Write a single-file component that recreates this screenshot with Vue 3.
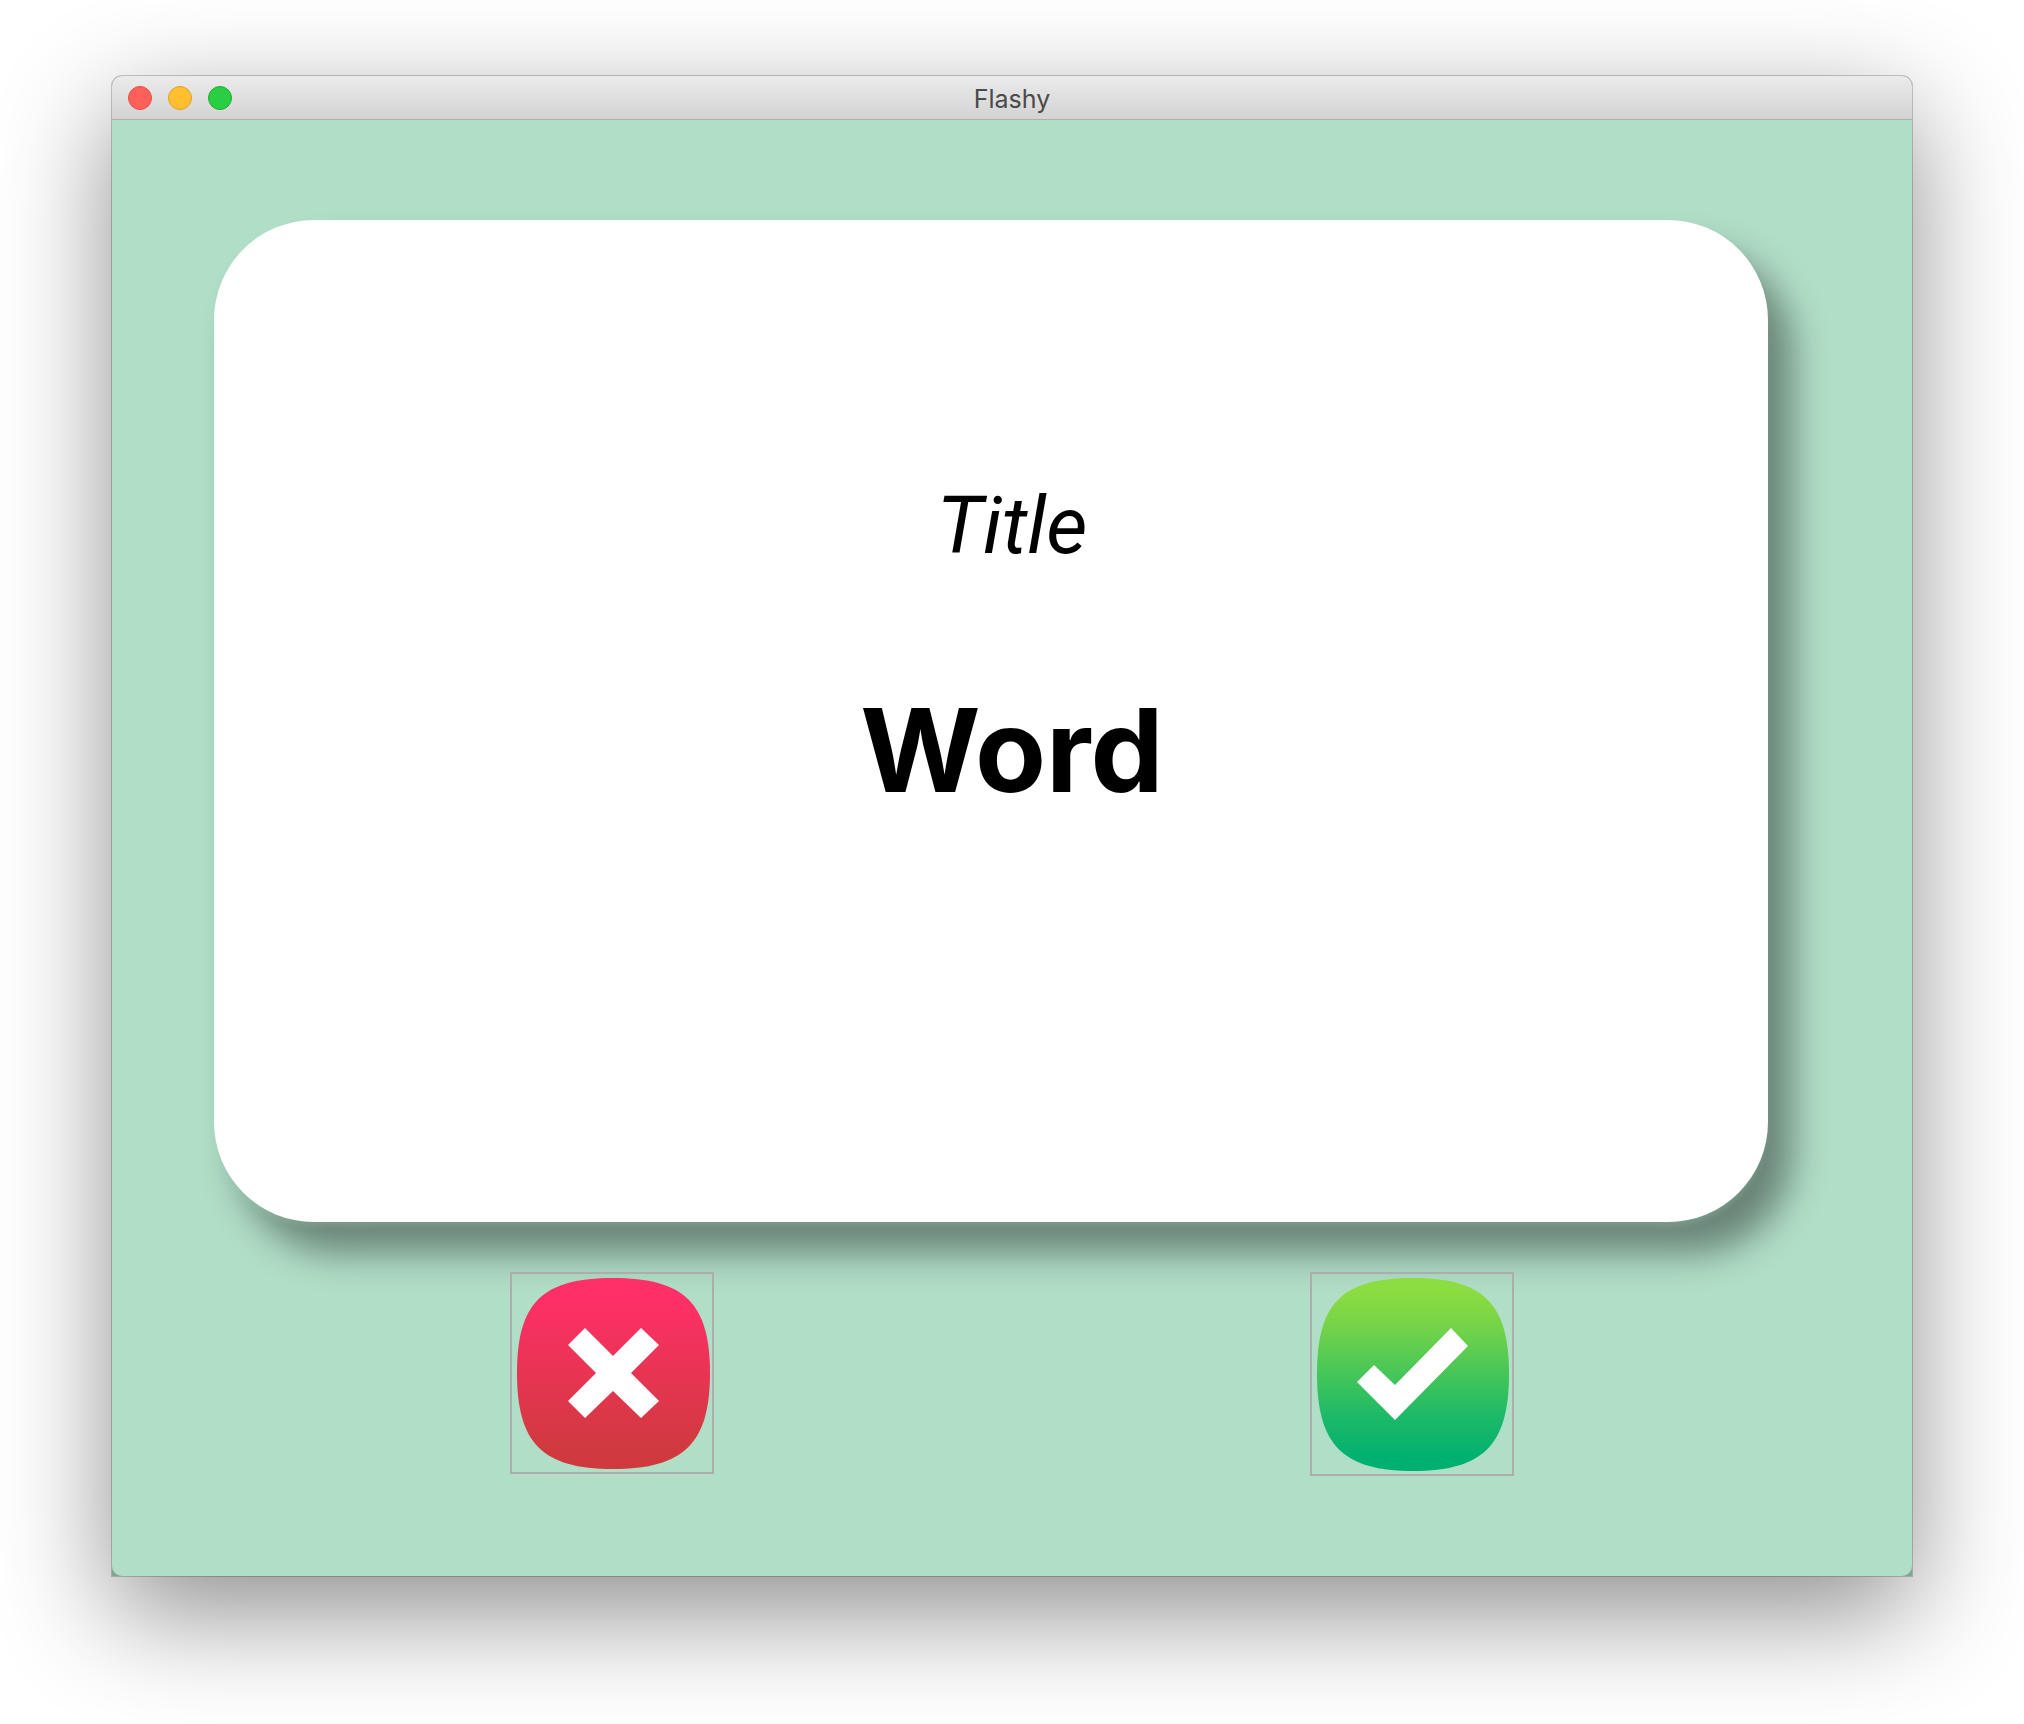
<script setup>
const windowTitle = 'Flashy'
const card = { title: 'Title', word: 'Word' }
</script>

<template>
  <div class="desktop">
    <main class="window">
      <header class="titlebar">
        <div class="controls">
          <button class="dot close" type="button" aria-label="Close"></button>
          <button class="dot minimize" type="button" aria-label="Minimize"></button>
          <button class="dot zoom" type="button" aria-label="Zoom"></button>
        </div>
        <h1 class="caption">{{ windowTitle }}</h1>
      </header>
      <div class="content">
        <section class="card">
          <p class="card-title">{{ card.title }}</p>
          <p class="card-word">{{ card.word }}</p>
        </section>
        <div class="actions">
          <button class="answer" type="button" aria-label="Wrong">
            <svg class="icon" width="200" height="198" viewBox="2 2 200 198">
              <defs>
                <linearGradient id="red" x1="0" y1="0" x2="0" y2="1">
                  <stop offset="0.1" stop-color="#ff2f68" />
                  <stop offset="0.5" stop-color="#e83453" />
                  <stop offset="0.9" stop-color="#d03a3e" />
                </linearGradient>
              </defs>
              <path
                d="M103 6C174 6 200 31 200 101S174 197 103 197 7 171 7 101 32 6 103 6Z"
                fill="url(#red)"
              />
              <path
                d="M75 56L103 84 131 56 149 73 121 101 149 129 131 146 103 119 75 146 58 129 86 101 58 73Z"
                fill="#fff"
              />
            </svg>
          </button>
          <button class="answer" type="button" aria-label="Right">
            <svg class="icon" width="200" height="200" viewBox="2 2 200 200">
              <defs>
                <linearGradient id="green" x1="0" y1="0" x2="0" y2="1">
                  <stop offset="0.06" stop-color="#8cdd41" />
                  <stop offset="0.22" stop-color="#7ad546" />
                  <stop offset="0.72" stop-color="#1cb968" />
                  <stop offset="0.94" stop-color="#00b070" />
                </linearGradient>
              </defs>
              <path
                d="M103 6C173 6 199 31 199 102S173 199 103 199 7 173 7 102 32 6 103 6Z"
                fill="url(#green)"
              />
              <path d="M64 93L85 113 141 56 158 74 85 148 47 110Z" fill="#fff" />
            </svg>
          </button>
        </div>
      </div>
    </main>
  </div>
</template>

<style>
body {
  margin: 0;
  background: #fff;
}
</style>

<style scoped>
.desktop {
  box-sizing: border-box;
  min-height: 100vh;
  padding: 76px 112px 148px;
  overflow: hidden;
  font-family: Inter, "Liberation Sans", sans-serif;
}

.window {
  border-radius: 10px 10px 0 0;
  background: #82a592;
  box-shadow:
    0 0 0 1px rgba(0, 0, 0, 0.2),
    0 36px 112px rgba(0, 0, 0, 0.45);
}

.titlebar {
  display: grid;
  grid-template-columns: 1fr auto 1fr;
  align-items: center;
  box-sizing: border-box;
  height: 44px;
  padding: 0 16px;
  border-bottom: 1px solid #afafaf;
  border-radius: 10px 10px 0 0;
  background: linear-gradient(#ebebeb, #d3d3d3);
}

.controls {
  display: flex;
  gap: 16px;
}

.dot {
  width: 24px;
  height: 24px;
  padding: 0;
  border: 1px solid;
  border-radius: 50%;
}

.close {
  border-color: #e2504a;
  background: #ff6059;
}

.minimize {
  border-color: #e0a02a;
  background: #ffbf2f;
}

.zoom {
  border-color: #1fab33;
  background: #29ce42;
}

.caption {
  margin: 0;
  padding-top: 2px;
  color: #4a4a4a;
  font-size: 25px;
  font-weight: 400;
  line-height: 32px;
}

.content {
  padding: 100px;
  border-radius: 0 0 10px 10px;
  background: #b1dec7;
}

.card {
  display: flex;
  flex-direction: column;
  align-items: center;
  box-sizing: border-box;
  height: 1002px;
  margin: 0 44px 0 2px;
  padding: 258px 0 0 42px;
  border-radius: 100px;
  background: #fff;
  color: #000;
  box-shadow:
    0 6px 6px -2px rgba(177, 222, 199, 0.25),
    24px 31px 36px rgba(0, 0, 0, 0.41);
}

.card-title {
  margin: 0;
  font-family: Roboto, "Liberation Sans", sans-serif;
  font-size: 80px;
  font-style: italic;
  font-weight: 400;
  line-height: 96px;
}

.card-word {
  margin: 104px 0 0;
  font-size: 116px;
  font-weight: 700;
  line-height: 144px;
}

.actions {
  display: grid;
  grid-template-columns: 1fr 1fr;
  align-items: start;
  justify-items: center;
  margin-top: 50px;
}

.answer {
  padding: 0;
  border: 2px solid #adadad;
  background: transparent;
}

.icon {
  display: block;
}
</style>
